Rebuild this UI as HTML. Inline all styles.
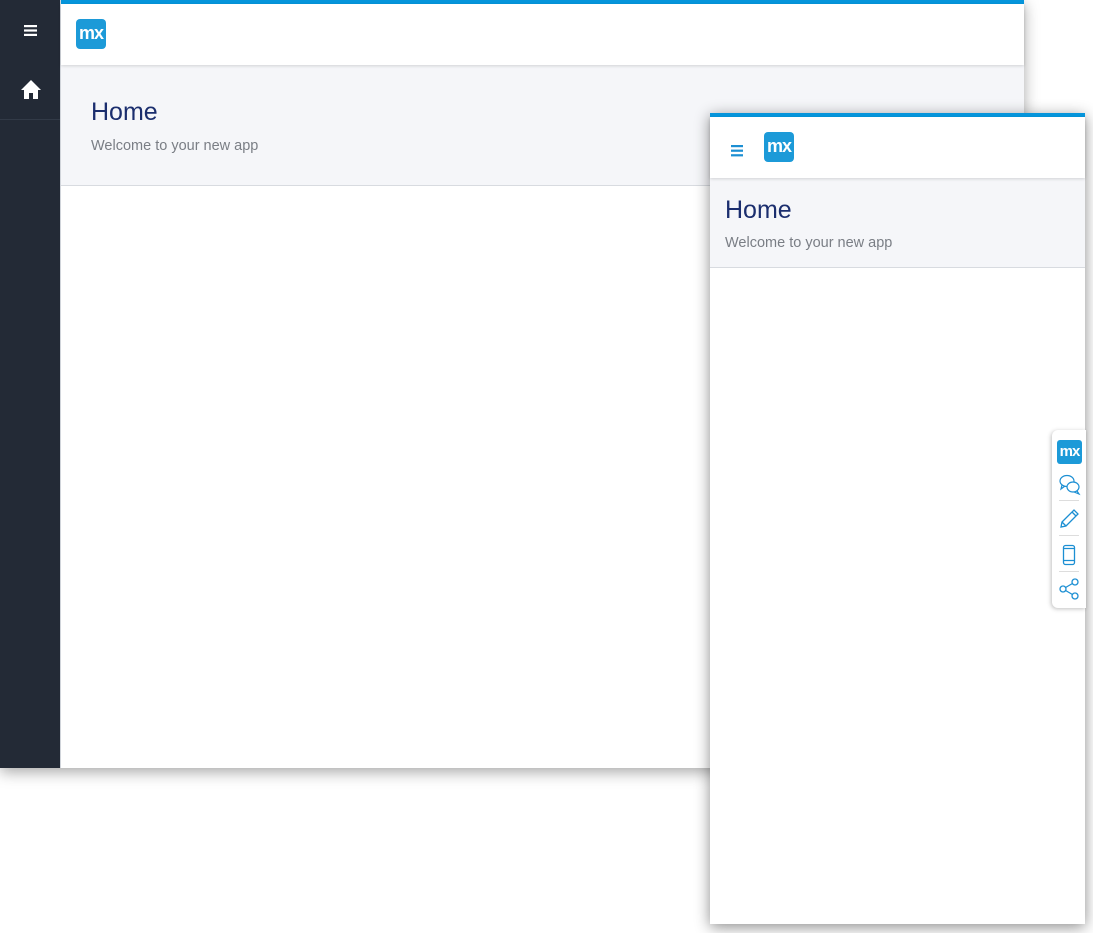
<!DOCTYPE html>
<html><head><meta charset="utf-8"><style>
*{margin:0;padding:0;box-sizing:border-box}
body{width:1093px;height:933px;background:#fff;position:relative;overflow:hidden;font-family:"Liberation Sans",sans-serif}
.win{position:absolute;left:0;top:0;width:1024px;height:768px;background:#fff;box-shadow:0 4px 14px rgba(0,0,0,.35)}
.side{position:absolute;left:0;top:0;width:60px;height:768px;background:#232a36}
.side .sep{position:absolute;left:0;top:119px;width:60px;height:1px;background:#323a47}
.main{position:absolute;left:60px;top:0;right:0;bottom:0;background:#fff;border-left:1px solid #d0d4da}
.bar{height:4px;background:#0595db}
.hdr{height:61px;background:#fff;box-shadow:0 1px 3px rgba(0,0,0,.15);position:relative;z-index:1}
.gray{background:#f5f6f9;border-bottom:1px solid #d8dbe0}
.logo{position:absolute;width:30px;height:30px;background:#1c9ad8;border-radius:4px;color:#fff;font-weight:bold;font-size:18px;letter-spacing:-1px;text-align:center;line-height:29px}
h1{font-weight:normal;color:#1b2e6e;font-size:25px}
p.s{color:#7a7e85;font-size:14.5px}
.phone{position:absolute;left:710px;top:113px;width:375px;height:811px;background:#fff;box-shadow:0 3px 14px rgba(0,0,0,.45)}
.panel{position:absolute;left:1052px;top:430px;width:34px;height:178px;background:#fff;border-radius:6px 0 0 6px;box-shadow:-1px 1px 4px rgba(0,0,0,.25)}
.panel .d{position:absolute;left:7px;width:20px;height:1px;background:#ddd}
</style></head><body>
<div class="win">
 <div class="side">
  <svg style="position:absolute;left:24px;top:24px" width="13" height="13" viewBox="0 0 13 13"><rect x="0" y="1" width="13" height="2.2" fill="#fff"/><rect x="0" y="5.4" width="13" height="2.2" fill="#fff"/><rect x="0" y="9.8" width="13" height="2.2" fill="#fff"/></svg>
  <svg style="position:absolute;left:20px;top:79px" width="22" height="21" viewBox="0 0 22 21"><path d="M11 1 L1 11 H4 V20 H9 V14 H13 V20 H18 V11 H21 Z" fill="#fff"/></svg>
  <div class="sep"></div>
 </div>
 <div class="main">
  <div class="bar"></div>
  <div class="hdr"><div class="logo" style="left:15px;top:15px">mx</div></div>
  <div class="gray" style="height:121px;padding:33px 0 0 30px"><h1>Home</h1><p class="s" style="margin-top:11px">Welcome to your new app</p></div>
 </div>
</div>
<div class="phone">
 <div class="bar"></div>
 <div class="hdr" style="height:61px">
  <svg style="position:absolute;left:21px;top:28px" width="12" height="12" viewBox="0 0 12 12"><rect x="0" y="0" width="12" height="2.2" fill="#1c8fd3"/><rect x="0" y="4.6" width="12" height="2.2" fill="#1c8fd3"/><rect x="0" y="9.2" width="12" height="2.2" fill="#1c8fd3"/></svg>
  <div class="logo" style="left:54px;top:15px">mx</div>
 </div>
 <div class="gray" style="height:90px;padding:18px 0 0 15px"><h1>Home</h1><p class="s" style="margin-top:10px">Welcome to your new app</p></div>
</div>
<div class="panel">
 <div class="logo" style="left:5px;top:10px;width:25px;height:24px;font-size:15px;line-height:23px;border-radius:3px">mx</div>
 <svg style="position:absolute;left:7px;top:44px" width="22" height="22" viewBox="0 0 22 22" fill="none" stroke="#1c8fd3" stroke-width="1.2"><ellipse cx="8" cy="7" rx="7" ry="5.5" fill="#fff"/><path d="M3 11 L2 15 L6 12"/><ellipse cx="14" cy="13" rx="6" ry="5" fill="#fff"/><path d="M18 17 L20 20 L15 18"/></svg>
 <div class="d" style="top:70px"></div>
 <svg style="position:absolute;left:7px;top:78px" width="21" height="21" viewBox="0 0 21 21" fill="none" stroke="#1c8fd3" stroke-width="1.3"><path d="M2 19 L3 14 L15 2 L19 6 L7 18 Z M13 4 L17 8 M3 14 L7 18"/></svg>
 <div class="d" style="top:105px"></div>
 <svg style="position:absolute;left:10px;top:114px" width="14" height="22" viewBox="0 0 14 22" fill="none" stroke="#1c8fd3" stroke-width="1.3"><rect x="1.5" y="1.5" width="11" height="19" rx="2"/><path d="M1.5 4.5 H12.5 M1.5 16.5 H12.5"/></svg>
 <div class="d" style="top:141px"></div>
 <svg style="position:absolute;left:7px;top:148px" width="22" height="22" viewBox="0 0 22 22" fill="none" stroke="#1c8fd3" stroke-width="1.3"><circle cx="16" cy="4" r="3"/><circle cx="4" cy="11" r="3"/><circle cx="16" cy="18" r="3"/><path d="M6.6 9.5 L13.4 5.5 M6.6 12.5 L13.4 16.5"/></svg>
</div>
</body></html>
